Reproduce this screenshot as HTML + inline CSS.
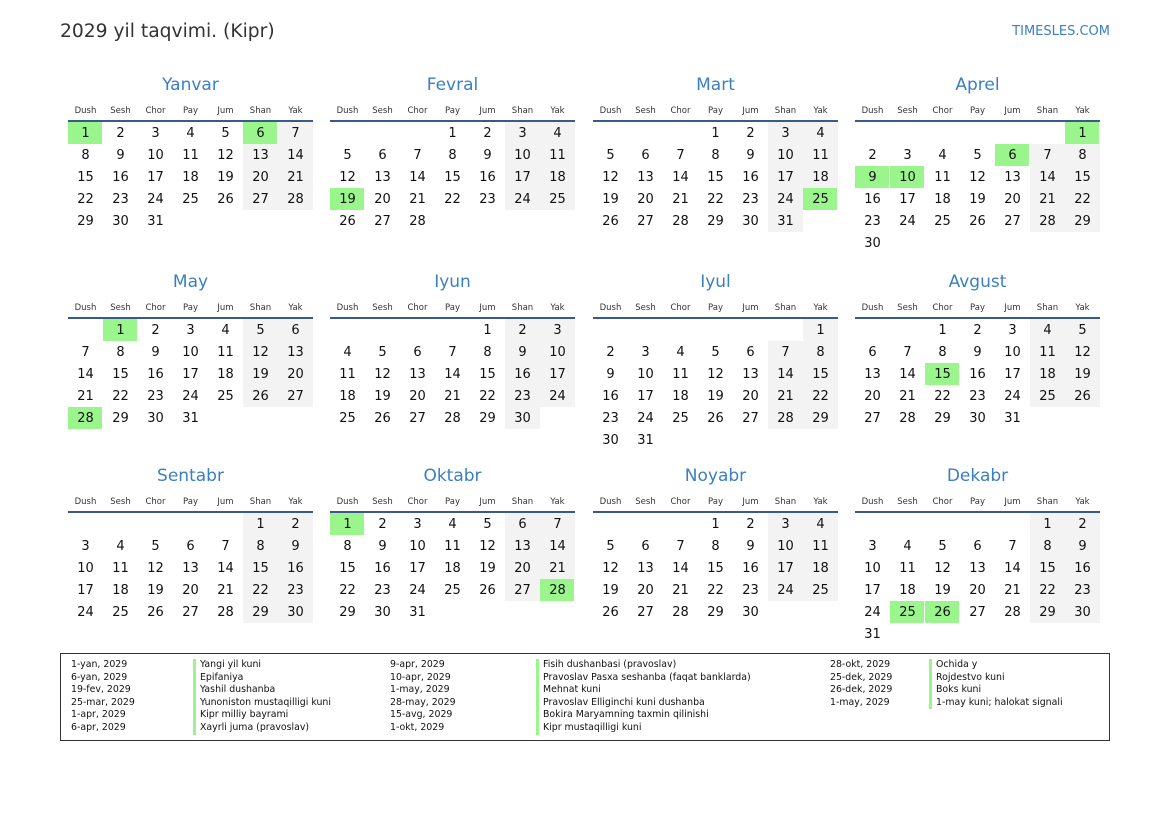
<!DOCTYPE html>
<html><head><meta charset="utf-8"><style>
body{margin:0;width:1169px;height:827px;background:#fff;font-family:"DejaVu Sans","Liberation Sans",sans-serif;color:#111;position:relative;overflow:hidden}
.hd{position:absolute;left:60px;top:21px;font-size:18.7px;color:#333}
.site{position:absolute;right:59px;top:24px;font-size:13px;color:#3a7fc1}
.m{position:absolute;width:245px}
.t{height:31px;line-height:31px;text-align:center;font-size:17px;color:#3a7fc1}
table{border-collapse:collapse;table-layout:fixed;width:245px}
td{width:35px;height:22px;padding:0;text-align:center;font-size:13px}
tr.dn td{height:19px;font-size:8.5px;color:#333;vertical-align:middle;border-bottom:2px solid #3b5a8c;line-height:10px}
.w{background:#f3f3f3}
.h{background:#9af58c;box-shadow:inset -1px 0 #fff}
.lg{position:absolute;left:60px;top:653px;width:1048px;height:86px;border:1px solid #333;font-size:9.4px;line-height:12.6px}
.c{position:absolute;top:5px;white-space:pre}
.b{border-left:3px solid #9af58c;padding-left:4px;display:block}
</style></head><body>
<div class="hd">2029 yil taqvimi. (Kipr)</div>
<div class="site">TIMESLES.COM</div>

<div class="m" style="left:68px;top:70px"><div class="t">Yanvar</div><table>
<tr class="dn"><td>Dush</td><td>Sesh</td><td>Chor</td><td>Pay</td><td>Jum</td><td>Shan</td><td>Yak</td></tr>
<tr><td class="h">1</td><td>2</td><td>3</td><td>4</td><td>5</td><td class="h">6</td><td class="w">7</td></tr>
<tr><td>8</td><td>9</td><td>10</td><td>11</td><td>12</td><td class="w">13</td><td class="w">14</td></tr>
<tr><td>15</td><td>16</td><td>17</td><td>18</td><td>19</td><td class="w">20</td><td class="w">21</td></tr>
<tr><td>22</td><td>23</td><td>24</td><td>25</td><td>26</td><td class="w">27</td><td class="w">28</td></tr>
<tr><td>29</td><td>30</td><td>31</td><td></td><td></td><td></td><td></td></tr></table></div>

<div class="m" style="left:330px;top:70px"><div class="t">Fevral</div><table>
<tr class="dn"><td>Dush</td><td>Sesh</td><td>Chor</td><td>Pay</td><td>Jum</td><td>Shan</td><td>Yak</td></tr>
<tr><td></td><td></td><td></td><td>1</td><td>2</td><td class="w">3</td><td class="w">4</td></tr>
<tr><td>5</td><td>6</td><td>7</td><td>8</td><td>9</td><td class="w">10</td><td class="w">11</td></tr>
<tr><td>12</td><td>13</td><td>14</td><td>15</td><td>16</td><td class="w">17</td><td class="w">18</td></tr>
<tr><td class="h">19</td><td>20</td><td>21</td><td>22</td><td>23</td><td class="w">24</td><td class="w">25</td></tr>
<tr><td>26</td><td>27</td><td>28</td><td></td><td></td><td></td><td></td></tr></table></div>

<div class="m" style="left:593px;top:70px"><div class="t">Mart</div><table>
<tr class="dn"><td>Dush</td><td>Sesh</td><td>Chor</td><td>Pay</td><td>Jum</td><td>Shan</td><td>Yak</td></tr>
<tr><td></td><td></td><td></td><td>1</td><td>2</td><td class="w">3</td><td class="w">4</td></tr>
<tr><td>5</td><td>6</td><td>7</td><td>8</td><td>9</td><td class="w">10</td><td class="w">11</td></tr>
<tr><td>12</td><td>13</td><td>14</td><td>15</td><td>16</td><td class="w">17</td><td class="w">18</td></tr>
<tr><td>19</td><td>20</td><td>21</td><td>22</td><td>23</td><td class="w">24</td><td class="h">25</td></tr>
<tr><td>26</td><td>27</td><td>28</td><td>29</td><td>30</td><td class="w">31</td><td></td></tr></table></div>

<div class="m" style="left:855px;top:70px"><div class="t">Aprel</div><table>
<tr class="dn"><td>Dush</td><td>Sesh</td><td>Chor</td><td>Pay</td><td>Jum</td><td>Shan</td><td>Yak</td></tr>
<tr><td></td><td></td><td></td><td></td><td></td><td></td><td class="h">1</td></tr>
<tr><td>2</td><td>3</td><td>4</td><td>5</td><td class="h">6</td><td class="w">7</td><td class="w">8</td></tr>
<tr><td class="h">9</td><td class="h">10</td><td>11</td><td>12</td><td>13</td><td class="w">14</td><td class="w">15</td></tr>
<tr><td>16</td><td>17</td><td>18</td><td>19</td><td>20</td><td class="w">21</td><td class="w">22</td></tr>
<tr><td>23</td><td>24</td><td>25</td><td>26</td><td>27</td><td class="w">28</td><td class="w">29</td></tr>
<tr><td>30</td><td></td><td></td><td></td><td></td><td></td><td></td></tr></table></div>

<div class="m" style="left:68px;top:267px"><div class="t">May</div><table>
<tr class="dn"><td>Dush</td><td>Sesh</td><td>Chor</td><td>Pay</td><td>Jum</td><td>Shan</td><td>Yak</td></tr>
<tr><td></td><td class="h">1</td><td>2</td><td>3</td><td>4</td><td class="w">5</td><td class="w">6</td></tr>
<tr><td>7</td><td>8</td><td>9</td><td>10</td><td>11</td><td class="w">12</td><td class="w">13</td></tr>
<tr><td>14</td><td>15</td><td>16</td><td>17</td><td>18</td><td class="w">19</td><td class="w">20</td></tr>
<tr><td>21</td><td>22</td><td>23</td><td>24</td><td>25</td><td class="w">26</td><td class="w">27</td></tr>
<tr><td class="h">28</td><td>29</td><td>30</td><td>31</td><td></td><td></td><td></td></tr></table></div>

<div class="m" style="left:330px;top:267px"><div class="t">Iyun</div><table>
<tr class="dn"><td>Dush</td><td>Sesh</td><td>Chor</td><td>Pay</td><td>Jum</td><td>Shan</td><td>Yak</td></tr>
<tr><td></td><td></td><td></td><td></td><td>1</td><td class="w">2</td><td class="w">3</td></tr>
<tr><td>4</td><td>5</td><td>6</td><td>7</td><td>8</td><td class="w">9</td><td class="w">10</td></tr>
<tr><td>11</td><td>12</td><td>13</td><td>14</td><td>15</td><td class="w">16</td><td class="w">17</td></tr>
<tr><td>18</td><td>19</td><td>20</td><td>21</td><td>22</td><td class="w">23</td><td class="w">24</td></tr>
<tr><td>25</td><td>26</td><td>27</td><td>28</td><td>29</td><td class="w">30</td><td></td></tr></table></div>

<div class="m" style="left:593px;top:267px"><div class="t">Iyul</div><table>
<tr class="dn"><td>Dush</td><td>Sesh</td><td>Chor</td><td>Pay</td><td>Jum</td><td>Shan</td><td>Yak</td></tr>
<tr><td></td><td></td><td></td><td></td><td></td><td></td><td class="w">1</td></tr>
<tr><td>2</td><td>3</td><td>4</td><td>5</td><td>6</td><td class="w">7</td><td class="w">8</td></tr>
<tr><td>9</td><td>10</td><td>11</td><td>12</td><td>13</td><td class="w">14</td><td class="w">15</td></tr>
<tr><td>16</td><td>17</td><td>18</td><td>19</td><td>20</td><td class="w">21</td><td class="w">22</td></tr>
<tr><td>23</td><td>24</td><td>25</td><td>26</td><td>27</td><td class="w">28</td><td class="w">29</td></tr>
<tr><td>30</td><td>31</td><td></td><td></td><td></td><td></td><td></td></tr></table></div>

<div class="m" style="left:855px;top:267px"><div class="t">Avgust</div><table>
<tr class="dn"><td>Dush</td><td>Sesh</td><td>Chor</td><td>Pay</td><td>Jum</td><td>Shan</td><td>Yak</td></tr>
<tr><td></td><td></td><td>1</td><td>2</td><td>3</td><td class="w">4</td><td class="w">5</td></tr>
<tr><td>6</td><td>7</td><td>8</td><td>9</td><td>10</td><td class="w">11</td><td class="w">12</td></tr>
<tr><td>13</td><td>14</td><td class="h">15</td><td>16</td><td>17</td><td class="w">18</td><td class="w">19</td></tr>
<tr><td>20</td><td>21</td><td>22</td><td>23</td><td>24</td><td class="w">25</td><td class="w">26</td></tr>
<tr><td>27</td><td>28</td><td>29</td><td>30</td><td>31</td><td></td><td></td></tr></table></div>

<div class="m" style="left:68px;top:461px"><div class="t">Sentabr</div><table>
<tr class="dn"><td>Dush</td><td>Sesh</td><td>Chor</td><td>Pay</td><td>Jum</td><td>Shan</td><td>Yak</td></tr>
<tr><td></td><td></td><td></td><td></td><td></td><td class="w">1</td><td class="w">2</td></tr>
<tr><td>3</td><td>4</td><td>5</td><td>6</td><td>7</td><td class="w">8</td><td class="w">9</td></tr>
<tr><td>10</td><td>11</td><td>12</td><td>13</td><td>14</td><td class="w">15</td><td class="w">16</td></tr>
<tr><td>17</td><td>18</td><td>19</td><td>20</td><td>21</td><td class="w">22</td><td class="w">23</td></tr>
<tr><td>24</td><td>25</td><td>26</td><td>27</td><td>28</td><td class="w">29</td><td class="w">30</td></tr></table></div>

<div class="m" style="left:330px;top:461px"><div class="t">Oktabr</div><table>
<tr class="dn"><td>Dush</td><td>Sesh</td><td>Chor</td><td>Pay</td><td>Jum</td><td>Shan</td><td>Yak</td></tr>
<tr><td class="h">1</td><td>2</td><td>3</td><td>4</td><td>5</td><td class="w">6</td><td class="w">7</td></tr>
<tr><td>8</td><td>9</td><td>10</td><td>11</td><td>12</td><td class="w">13</td><td class="w">14</td></tr>
<tr><td>15</td><td>16</td><td>17</td><td>18</td><td>19</td><td class="w">20</td><td class="w">21</td></tr>
<tr><td>22</td><td>23</td><td>24</td><td>25</td><td>26</td><td class="w">27</td><td class="h">28</td></tr>
<tr><td>29</td><td>30</td><td>31</td><td></td><td></td><td></td><td></td></tr></table></div>

<div class="m" style="left:593px;top:461px"><div class="t">Noyabr</div><table>
<tr class="dn"><td>Dush</td><td>Sesh</td><td>Chor</td><td>Pay</td><td>Jum</td><td>Shan</td><td>Yak</td></tr>
<tr><td></td><td></td><td></td><td>1</td><td>2</td><td class="w">3</td><td class="w">4</td></tr>
<tr><td>5</td><td>6</td><td>7</td><td>8</td><td>9</td><td class="w">10</td><td class="w">11</td></tr>
<tr><td>12</td><td>13</td><td>14</td><td>15</td><td>16</td><td class="w">17</td><td class="w">18</td></tr>
<tr><td>19</td><td>20</td><td>21</td><td>22</td><td>23</td><td class="w">24</td><td class="w">25</td></tr>
<tr><td>26</td><td>27</td><td>28</td><td>29</td><td>30</td><td></td><td></td></tr></table></div>

<div class="m" style="left:855px;top:461px"><div class="t">Dekabr</div><table>
<tr class="dn"><td>Dush</td><td>Sesh</td><td>Chor</td><td>Pay</td><td>Jum</td><td>Shan</td><td>Yak</td></tr>
<tr><td></td><td></td><td></td><td></td><td></td><td class="w">1</td><td class="w">2</td></tr>
<tr><td>3</td><td>4</td><td>5</td><td>6</td><td>7</td><td class="w">8</td><td class="w">9</td></tr>
<tr><td>10</td><td>11</td><td>12</td><td>13</td><td>14</td><td class="w">15</td><td class="w">16</td></tr>
<tr><td>17</td><td>18</td><td>19</td><td>20</td><td>21</td><td class="w">22</td><td class="w">23</td></tr>
<tr><td>24</td><td class="h">25</td><td class="h">26</td><td>27</td><td>28</td><td class="w">29</td><td class="w">30</td></tr>
<tr><td>31</td><td></td><td></td><td></td><td></td><td></td><td></td></tr></table></div>

<div class="lg">
<div class="c" style="left:10px">1-yan, 2029
6-yan, 2029
19-fev, 2029
25-mar, 2029
1-apr, 2029
6-apr, 2029</div>
<div class="c" style="left:132px"><span class="b">Yangi yil kuni</span><span class="b">Epifaniya</span><span class="b">Yashil dushanba</span><span class="b">Yunoniston mustaqilligi kuni</span><span class="b">Kipr milliy bayrami</span><span class="b">Xayrli juma (pravoslav)</span></div>
<div class="c" style="left:329px">9-apr, 2029
10-apr, 2029
1-may, 2029
28-may, 2029
15-avg, 2029
1-okt, 2029</div>
<div class="c" style="left:475px"><span class="b">Fisih dushanbasi (pravoslav)</span><span class="b">Pravoslav Pasxa seshanba (faqat banklarda)</span><span class="b">Mehnat kuni</span><span class="b">Pravoslav Elliginchi kuni dushanba</span><span class="b">Bokira Maryamning taxmin qilinishi</span><span class="b">Kipr mustaqilligi kuni</span></div>
<div class="c" style="left:769px">28-okt, 2029
25-dek, 2029
26-dek, 2029
1-may, 2029</div>
<div class="c" style="left:868px"><span class="b">Ochida y</span><span class="b">Rojdestvo kuni</span><span class="b">Boks kuni</span><span class="b">1-may kuni; halokat signali</span></div>
</div>
</body></html>
